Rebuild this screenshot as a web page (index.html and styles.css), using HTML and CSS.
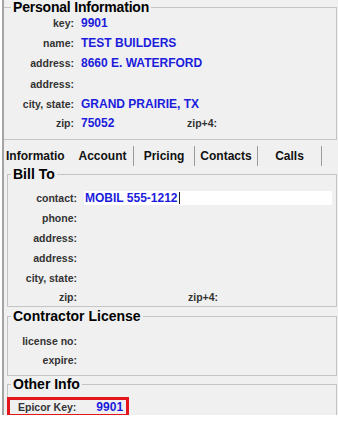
FILE: index.html
```html
<!DOCTYPE html>
<html lang="en">
<head>
  <meta charset="UTF-8" />
  <title>Customer</title>
  <link rel="stylesheet" href="styles.css">
</head>
<body>
  <div class="panel">
    <fieldset class="group personal">
      <legend>Personal Information</legend>
      <div class="rows">
        <div class="row"><span class="label">key:</span><span class="value">9901</span></div>
        <div class="row"><span class="label">name:</span><span class="value">TEST BUILDERS</span></div>
        <div class="row"><span class="label">address:</span><span class="value">8660 E. WATERFORD</span></div>
        <div class="row tall"><span class="label">address:</span><span class="value"></span></div>
        <div class="row"><span class="label">city, state:</span><span class="value">GRAND PRAIRIE, TX</span></div>
        <div class="row short">
          <span class="label">zip:</span>
          <span class="value"><span class="zip">75052</span><span class="label">zip+4:</span></span>
        </div>
      </div>
    </fieldset>

    <div class="tabs">
      <div class="tab first">Informatio</div>
      <div class="tab account">Account</div>
      <div class="tab pricing">Pricing</div>
      <div class="tab contacts">Contacts</div>
      <div class="tab calls">Calls</div>
    </div>

    <fieldset class="group bill">
      <legend>Bill To</legend>
      <div class="rows">
        <div class="row">
          <span class="label">contact:</span>
          <span class="input"><span class="value">MOBIL 555-1212</span><span class="caret"></span></span>
        </div>
        <div class="row"><span class="label">phone:</span><span class="value"></span></div>
        <div class="row"><span class="label">address:</span><span class="value"></span></div>
        <div class="row"><span class="label">address:</span><span class="value"></span></div>
        <div class="row"><span class="label">city, state:</span><span class="value"></span></div>
        <div class="row short">
          <span class="label">zip:</span>
          <span class="value"><span class="zip">&nbsp;</span><span class="label">zip+4:</span></span>
        </div>
      </div>
    </fieldset>

    <fieldset class="group license">
      <legend>Contractor License</legend>
      <div class="rows">
        <div class="row"><span class="label">license no:</span><span class="value"></span></div>
        <div class="row"><span class="label">expire:</span><span class="value"></span></div>
      </div>
    </fieldset>

    <fieldset class="group other">
      <legend>Other Info</legend>
      <div class="highlight">
        <span class="label">Epicor Key:</span>
        <span class="value">9901</span>
      </div>
    </fieldset>
  </div>
</body>
</html>
```

FILE: styles.css
```css
body {
  margin: 0;
  background: #fff;
  font-family: "Liberation Sans", Arial, sans-serif;
}

.panel {
  margin-left: 2px;
  border-left: 2px solid #a4a4a4;
  height: 415px;
  background: #f0f0f0;
}

.group {
  margin: 0 1px 0 3px;
  padding: 0;
  min-width: 0;
  border: 1px solid #c4c4c4;
}

.group legend {
  margin-left: 3px;
  padding: 0 2px;
  font-size: 14px;
  line-height: 14px;
  font-weight: bold;
  color: #000;
}

.personal {
  margin: 0 1px 0 0;
  padding-bottom: 7px;
  border-left: none;
}

.personal legend {
  margin-left: 7px;
  letter-spacing: -0.2px;
}

.personal .rows {
  margin-top: -1px;
}

.row {
  display: grid;
  grid-template-columns: 70px 1fr;
  column-gap: 7px;
  align-items: center;
  height: 20px;
}

.row.tall {
  height: 21px;
}

.row.short {
  height: 18px;
}

.label {
  font-size: 10.5px;
  font-weight: bold;
  color: #333;
  text-align: right;
  white-space: nowrap;
}

.value {
  font-size: 12px;
  font-weight: bold;
  color: #1c1cdc;
  white-space: nowrap;
}

.zip {
  display: inline-block;
  width: 106px;
}

/* tab strip */
.tabs {
  display: flex;
  padding: 6px 0 1px;
}

.tab {
  box-sizing: border-box;
  height: 20px;
  display: flex;
  align-items: center;
  justify-content: center;
  font-size: 12px;
  font-weight: bold;
  color: #111;
  border-right: 1px solid #999;
}

.tab.first {
  width: 68px;
  padding-left: 2px;
  justify-content: flex-start;
  overflow: hidden;
  border-right: none;
}

.tab.account { width: 62px; }
.tab.pricing { width: 61px; }
.tab.contacts { width: 63px; }
.tab.calls { width: 64px; }

/* bill to */
.bill {
  padding-top: 7px;
}

.bill .row,
.license .row {
  grid-template-columns: 69px 1fr;
  column-gap: 8px;
}

.bill .zip {
  width: 103px;
}

.input {
  display: flex;
  align-items: center;
  height: 14px;
  margin: 0 4px 0 -1px;
  padding-left: 1px;
  background: #fff;
}

.caret {
  display: inline-block;
  width: 1px;
  height: 12px;
  margin-left: 1px;
  background: #222;
}

.license {
  margin-top: 2px;
  padding: 8px 0 6px;
}

.license .row {
  height: 19px;
}

.other {
  margin-top: 1px;
  padding-top: 6px;
  border-bottom: none;
}

.highlight {
  box-sizing: border-box;
  display: flex;
  align-items: center;
  width: 122px;
  height: 20px;
  margin: 0 0 -2px -1px;
  padding-left: 8px;
  border: 3px solid #e2171c;
}

.highlight .value {
  margin-left: 20px;
}
```
